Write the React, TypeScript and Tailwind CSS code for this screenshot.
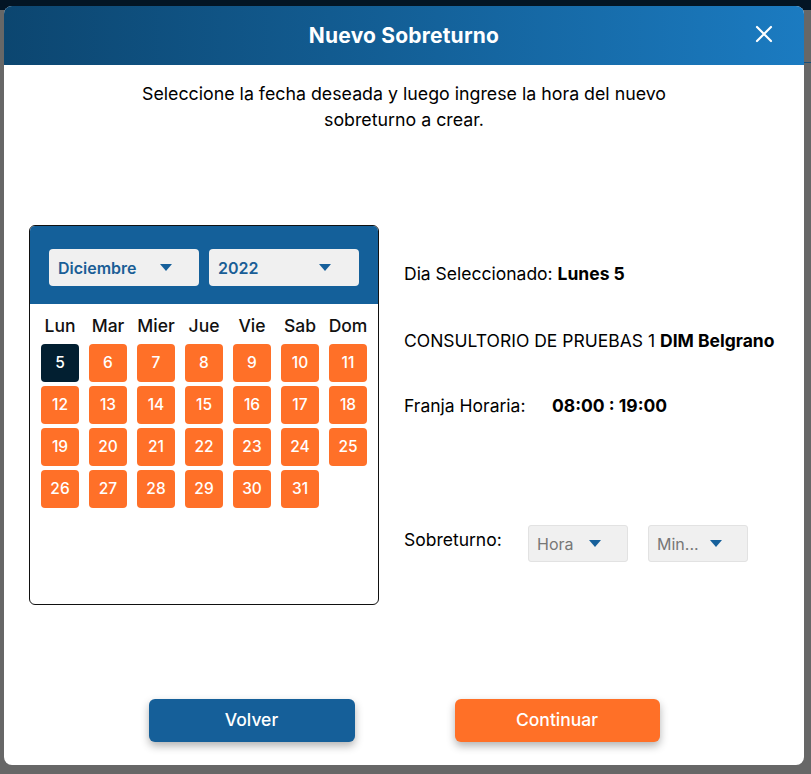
import React from "react";

const font = { fontFamily: "Inter, 'Noto Sans', sans-serif" };

function Caret({ className = "" }: { className?: string }) {
  return (
    <svg width="12" height="8" viewBox="0 0 12 8" className={className}>
      <path d="M0 0 L12 0 L6 7 Z" fill="#16609b" />
    </svg>
  );
}

const days = ["Lun", "Mar", "Mier", "Jue", "Vie", "Sab", "Dom"];
const nums = Array.from({ length: 27 }, (_, i) => i + 5);

export default function App() {
  return (
    <div className="relative w-[811px] h-[774px] bg-[#676767] overflow-hidden" style={font}>
      <div className="h-[10px] bg-[#031524]" />
      <div className="absolute right-0 top-[62px] w-[8px] h-[1px] bg-[#1a4f78]" />
      <div className="absolute left-[4px] top-[6px] w-[800px] h-[759px] bg-white rounded-[8px] overflow-hidden flex flex-col">
        <div className="relative h-[59px] shrink-0 flex items-center justify-center bg-gradient-to-r from-[#0c4670] to-[#1b7bc1]">
          <span className="text-white text-[21px] font-bold tracking-[0.2px]">Nuevo Sobreturno</span>
          <svg className="absolute right-[31px] top-[19px]" width="18" height="18" viewBox="0 0 18 18">
            <path d="M2 2 L16 16 M16 2 L2 16" stroke="white" strokeWidth="2.2" strokeLinecap="round" />
          </svg>
        </div>
        <div className="flex-1 flex flex-col">
          <p className="mx-auto mt-[16px] w-[580px] text-center text-[17.8px] leading-[26px] font-normal text-black">
            Seleccione la fecha deseada y luego ingrese la hora del nuevo sobreturno a crear.
          </p>
          <div className="flex mt-[92px] pl-[25px] gap-[25px]">
            <div className="w-[350px] h-[380px] border border-[#111] rounded-[6px] overflow-hidden shrink-0">
              <div className="h-[78px] bg-[#14609a] flex gap-[10px] pl-[19px] pt-[23px]">
                <div className="w-[150px] h-[37px] bg-[#f0f0f0] rounded-[4px] flex items-center justify-between pl-[9px] pr-[27px]">
                  <span className="text-[16px] font-semibold text-[#1a5e96]">Diciembre</span>
                  <Caret />
                </div>
                <div className="w-[150px] h-[37px] bg-[#f0f0f0] rounded-[4px] flex items-center justify-between pl-[9px] pr-[28px]">
                  <span className="text-[16px] font-semibold text-[#1a5e96]">2022</span>
                  <Caret />
                </div>
              </div>
              <div className="grid grid-cols-[repeat(7,38px)] gap-x-[10px] gap-y-[4px] pl-[11px] pt-[12px]">
                {days.map((d) => (
                  <div key={d} className="h-[20px] flex items-center justify-center text-[17.5px] font-medium text-[#111] whitespace-nowrap mb-[4px]">
                    {d}
                  </div>
                ))}
                {nums.map((n) => (
                  <div
                    key={n}
                    className={
                      n === 5
                        ? "h-[38px] rounded-[4px] bg-[#021f31] text-white flex items-center justify-center text-[15.5px] font-medium"
                        : "h-[38px] rounded-[4px] bg-[#ff7028] text-white flex items-center justify-center text-[15.5px] font-medium"
                    }
                  >
                    {n}
                  </div>
                ))}
              </div>
            </div>
            <div className="flex flex-col text-[17.5px] text-black pt-[37px]">
              <div className="h-[24px] flex items-center">
                Dia Seleccionado:&nbsp;<span className="font-bold">Lunes 5</span>
              </div>
              <div className="h-[24px] flex items-center mt-[43px] whitespace-nowrap">
                CONSULTORIO DE PRUEBAS 1&nbsp;<span className="font-bold">DIM Belgrano</span>
              </div>
              <div className="h-[24px] flex items-center mt-[41px]">
                <span className="w-[148px]">Franja Horaria:</span>
                <span className="font-bold">08:00 : 19:00</span>
              </div>
              <div className="flex items-start mt-[107px]">
                <span className="w-[124px] h-[30px] flex items-center">Sobreturno:</span>
                <div className="w-[100px] h-[37px] bg-[#f0f0f0] border border-[#e2e2e2] rounded-[3px] flex items-center pl-[8px] gap-[15px]">
                  <span className="text-[16px] text-[#777]">Hora</span>
                  <Caret />
                </div>
                <div className="w-[100px] h-[37px] bg-[#f0f0f0] border border-[#e2e2e2] rounded-[3px] flex items-center pl-[8px] gap-[11px] ml-[20px]">
                  <span className="text-[16px] text-[#777]">Min...</span>
                  <Caret />
                </div>
              </div>
            </div>
          </div>
          <div className="mt-auto mb-[23px] flex justify-center gap-[100px]">
            <button className="w-[206px] h-[43px] rounded-[6px] bg-[#155f99] text-white text-[17.5px] font-medium shadow-[0_4px_8px_rgba(0,0,0,0.3)]">
              Volver
            </button>
            <button className="w-[205px] h-[43px] rounded-[6px] bg-[#ff7027] text-white text-[17.5px] font-medium shadow-[0_4px_8px_rgba(0,0,0,0.3)]">
              Continuar
            </button>
          </div>
        </div>
      </div>
    </div>
  );
}
